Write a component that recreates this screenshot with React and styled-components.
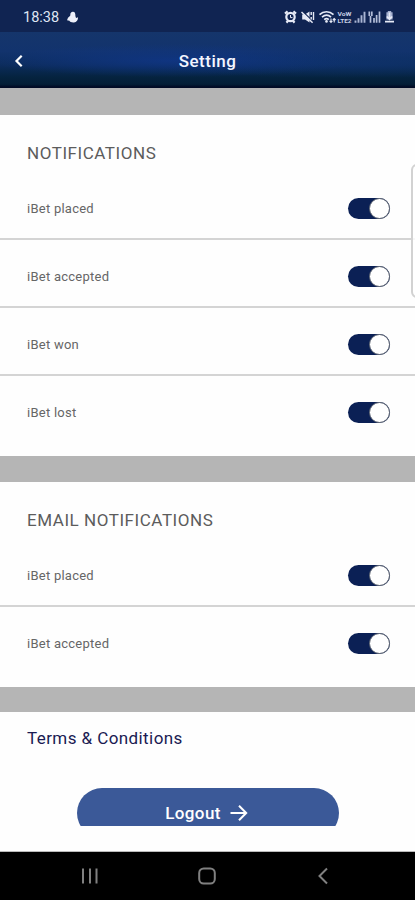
import React, { Component } from 'react';
import styled, { createGlobalStyle } from 'styled-components'

const notifications = ['iBet placed', 'iBet accepted', 'iBet won', 'iBet lost']
const emailNotifications = ['iBet placed', 'iBet accepted']

const StatusIcons = () => (
    <svg width="112" height="16" viewBox="0 0 112 16" fill="none" stroke="#e6eaf6">
        {/* alarm */}
        <circle cx="6.5" cy="8" r="4.200" strokeWidth="2.200" />
        <path d="M1 4.6L3.6 2.4M12 4.6L9.4 2.4M2.4 13.600L4 12M10.6 13.600L9 12" strokeWidth="2.200" />
        <path d="M6.5 6v2.600h2" strokeWidth="1" />
        {/* muted speaker */}
        <path d="M18.2 5.500h2.700L25.500 2.500v11L21 10.500h-2.800z" fill="#e6eaf6" stroke="none" />
        <path d="M18.500 2.200L29.500 13" stroke="#102452" strokeWidth="1.200" />
        <path d="M17.500 3L28.600 13.800" strokeWidth="1.500" />
        <path d="M27.200 3v3M29.500 3v8M27.200 8v2.500" strokeWidth="1.400" />
        {/* wifi */}
        <path d="M35.500 5.600c4-3.800 10-3.800 14 0M38 8.200c3-2.600 6.200-2.600 9 0M40.200 10.600c1.500-1.300 3.200-1.300 4.600 0" strokeWidth="1.700" />
        <circle cx="42.500" cy="12.400" r="1.300" fill="#e6eaf6" stroke="none" />
        <path d="M47 9.500v4M45.600 11.900l1.400 1.600 1.400-1.600M50.200 13.500v-4M48.800 11l1.400-1.500 1.400 1.500" strokeWidth="1.100" />
        <text x="53.500" y="6.700" fontSize="5.600" fontWeight="700" fill="#cbd2e6" stroke="none" textLength="14" lengthAdjust="spacingAndGlyphs">VoW</text>
        <text x="53.500" y="13.700" fontSize="5.600" fontWeight="700" fill="#cbd2e6" stroke="none" textLength="14" lengthAdjust="spacingAndGlyphs">LTE2</text>
        {/* signal bars */}
        <path d="M71.500 13.800v-2.300M74.500 13.800v-4.500M77.500 13.800v-7.500M80.500 13.800v-11" strokeWidth="1.900" stroke="#a9b4d2" />
        <path d="M85.300 2.500v4.500M87.800 2.500v4.500M86.500 7v6.800M90 13.800V9M92.600 13.800V6M95.500 13.800V2.500" strokeWidth="1.700" stroke="#b4bed9" />
        {/* battery */}
        <path d="M103.800 2h3.400v1.200h1.400v7.300h-6.200V3.200h1.400z" fill="#a5b0d0" stroke="none" />
        <path d="M105.500 3.500v6M102.800 7.500l2.700 2.700 2.700-2.700M101 12.600h9" strokeWidth="1.700" />
    </svg>
)

class Toggle extends Component {
    render() {
        const { on } = this.props;
        return (
            <Track type="button" role="switch" aria-checked={on} $on={on}>
                <Knob />
            </Track>
        )
    }
}

class Section extends Component {
    render() {
        const { title, items } = this.props;
        return (
            <Panel>
                <SectionTitle>{title}</SectionTitle>
                {items.map((item, index) => (
                    <Row key={item} $last={index === items.length - 1}>
                        <span>{item}</span>
                        <Toggle on={true} />
                    </Row>
                ))}
            </Panel>
        )
    }
}

export default class App extends Component {
    render() {
        return (
            <Screen>
                <GlobalStyle />
                <StatusBar>
                    <Clock>
                        18:38
                        <svg width="13" height="14" viewBox="0 0 13 14" fill="#edf0fa">
                            <path d="M4.500 3.200a2.500 2.500 0 0 1 4.800 1c0 1.500.2 2.600.9 3.800l1.800-.8c.2 2.800-1.400 5-4 5.300-2.400.2-4-.6-4.600-1.700L1 10.200l1-2.400 2.200-2z" />
                        </svg>
                    </Clock>
                    <StatusIcons />
                </StatusBar>
                <Header>
                    <BackButton type="button" aria-label="Back">
                        <svg width="9" height="14" viewBox="0 0 9 14" fill="none" stroke="#fff" strokeWidth="2.200">
                            <path d="M7.700 1.800L2.500 7l5.200 5.200" />
                        </svg>
                    </BackButton>
                    <Title>Setting</Title>
                </Header>
                <Divider $height={27} />
                <Section title="NOTIFICATIONS" items={notifications} />
                <Divider $height={26} />
                <Section title="EMAIL NOTIFICATIONS" items={emailNotifications} />
                <Divider $height={25} />
                <Footer>
                    <Terms>Terms &amp; Conditions</Terms>
                    <LogoutArea>
                        <LogoutButton type="button">
                            Logout
                            <svg width="18" height="18" viewBox="0 0 18 18" fill="none" stroke="#fff" strokeWidth="2">
                                <path d="M.5 9h16M9 1.800L16.200 9 9 16.200" />
                            </svg>
                        </LogoutButton>
                    </LogoutArea>
                </Footer>
                <NavBar>
                    <svg width="18" height="18" viewBox="0 0 18 18" stroke="#808080" strokeWidth="2">
                        <path d="M2 1.500v15M9 1.500v15M15.500 1.500v15" />
                    </svg>
                    <svg width="18" height="18" viewBox="0 0 18 18" fill="none" stroke="#808080" strokeWidth="2">
                        <rect x="1.200" y="1.500" width="15.600" height="15" rx="4.500" />
                    </svg>
                    <svg width="18" height="18" viewBox="0 0 18 18" fill="none" stroke="#808080" strokeWidth="2">
                        <path d="M13 1.500L5.500 9l7.500 7.500" />
                    </svg>
                </NavBar>
                <EdgeHandle />
            </Screen>
        )
    }
}

const GlobalStyle = createGlobalStyle`
* {
    box-sizing: border-box;
}
body {
    margin: 0;
    background: #fff;
    font-family: Roboto, "Liberation Sans", sans-serif;
}
button {
    border: none;
    padding: 0;
    font-family: inherit;
    cursor: pointer;
}
svg {
    display: block;
}
`
const Screen = styled.div`
position: relative;
display: flex;
flex-direction: column;
width: 415px;
height: 900px;
overflow: hidden;
background: #fefefe;
`
const StatusBar = styled.div`
display: flex;
justify-content: space-between;
align-items: center;
height: 32px;
padding: 2px 19px 0 23px;
background: #102452;
`
const Clock = styled.div`
display: flex;
align-items: center;
gap: 7px;
color: #dfe4f2;
font-size: 14.5px;
`
const Header = styled.div`
display: grid;
grid-template-columns: 60px 1fr 60px;
align-items: center;
height: 56px;
padding-top: 3px;
border-bottom: 1px solid #020b25;
background:
    radial-gradient(ellipse 45% 30% at 42% 52%, rgba(16,54,136,0.8), transparent),
    radial-gradient(ellipse 50% 26% at 85% 58%, rgba(15,52,112,0.6), transparent),
    linear-gradient(#15356b 0%, #12336d 35%, #0c2c5c 60%, #05233f 82%, #041e36 95%, #010a24 100%);
`
const BackButton = styled.button`
display: flex;
padding-left: 14px;
background: none;
`
const Title = styled.h1`
margin: 0;
text-align: center;
color: #f4f6ff;
font-size: 17px;
font-weight: 500;
letter-spacing: 0.5px;
`
const Divider = styled.div`
flex: none;
height: ${props => props.$height}px;
background: #b5b5b5;
`
const Panel = styled.section`
flex: none;
padding-bottom: 12px;
background: #fefefe;
`
const SectionTitle = styled.h2`
display: flex;
align-items: center;
height: 57px;
margin: 0;
padding: 19px 27px 0;
color: #5c5c5c;
font-size: 17px;
font-weight: 400;
letter-spacing: 0.55px;
`
const Row = styled.div`
display: flex;
justify-content: space-between;
align-items: center;
height: 68px;
padding: 7px 25px 0 27px;
border-bottom: 2px solid ${props => props.$last ? 'transparent' : '#d4d4d4'};
color: #666;
font-size: 13px;
letter-spacing: 0.25px;
`
const Track = styled.button`
display: flex;
justify-content: ${props => props.$on ? 'flex-end' : 'flex-start'};
align-items: center;
width: 42px;
height: 21px;
border-radius: 11px;
background: ${props => props.$on ? '#0b2055' : '#c4c4c4'};
`
const Knob = styled.span`
width: 21px;
height: 21px;
border: 1px solid #5b6270;
border-radius: 50%;
background: #fff;
`
const Footer = styled.div`
flex: 1;
display: flex;
flex-direction: column;
align-items: center;
border-bottom: 1px solid #bbb;
`
const Terms = styled.div`
align-self: stretch;
height: 76px;
padding: 16px 27px 0;
color: #1a1a52;
font-size: 17px;
line-height: 20px;
letter-spacing: 0.42px;
`
const LogoutArea = styled.div`
height: 38px;
overflow: hidden;
`
const LogoutButton = styled.button`
display: flex;
justify-content: center;
align-items: center;
gap: 9px;
width: 262px;
height: 50px;
padding-right: 2px;
border-radius: 25px;
background: #3b5998;
color: #fff;
font-size: 17px;
font-weight: 500;
letter-spacing: 0.4px;
`
const NavBar = styled.div`
flex: none;
display: flex;
justify-content: space-between;
align-items: center;
height: 48px;
padding: 0 83px 0 81px;
background: #000;
`
// edge panel handle lies over the page on the right
const EdgeHandle = styled.div`
position: absolute;
top: 164px;
right: -8px;
width: 12px;
height: 134px;
border: 2px solid #d2d2d2;
border-radius: 6px;
background: rgba(255,255,255,0.8);
`
